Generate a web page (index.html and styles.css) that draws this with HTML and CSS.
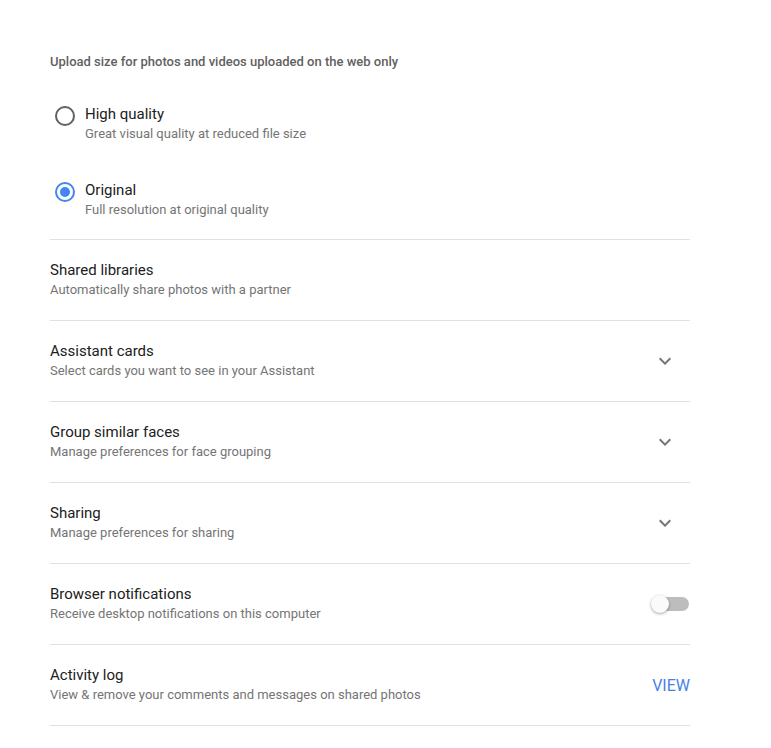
FILE: index.html
```html
<!DOCTYPE html>
<html lang="en">
<head>
<meta charset="utf-8">
<title>Settings</title>
<link rel="stylesheet" href="styles.css">
</head>
<body>
<main class="settings">
  <section class="upload">
    <div class="section-head">Upload size for photos and videos uploaded on the web only</div>
    <div class="radio-group">
      <div class="radio-option">
        <span class="radio"></span>
        <div class="text">
          <div class="title">High quality</div>
          <div class="sub">Great visual quality at reduced file size</div>
        </div>
      </div>
      <div class="radio-option">
        <span class="radio checked"></span>
        <div class="text">
          <div class="title">Original</div>
          <div class="sub">Full resolution at original quality</div>
        </div>
      </div>
    </div>
  </section>

  <div class="row">
    <div class="text">
      <div class="title">Shared libraries</div>
      <div class="sub">Automatically share photos with a partner</div>
    </div>
  </div>

  <div class="row">
    <div class="text">
      <div class="title">Assistant cards</div>
      <div class="sub">Select cards you want to see in your Assistant</div>
    </div>
    <svg class="chevron" viewBox="0 0 24 24" width="24" height="24"><path d="M16.59 8.59L12 13.17 7.41 8.59 6 10l6 6 6-6z"/></svg>
  </div>

  <div class="row">
    <div class="text">
      <div class="title">Group similar faces</div>
      <div class="sub">Manage preferences for face grouping</div>
    </div>
    <svg class="chevron" viewBox="0 0 24 24" width="24" height="24"><path d="M16.59 8.59L12 13.17 7.41 8.59 6 10l6 6 6-6z"/></svg>
  </div>

  <div class="row">
    <div class="text">
      <div class="title">Sharing</div>
      <div class="sub">Manage preferences for sharing</div>
    </div>
    <svg class="chevron" viewBox="0 0 24 24" width="24" height="24"><path d="M16.59 8.59L12 13.17 7.41 8.59 6 10l6 6 6-6z"/></svg>
  </div>

  <div class="row">
    <div class="text">
      <div class="title">Browser notifications</div>
      <div class="sub">Receive desktop notifications on this computer</div>
    </div>
    <div class="toggle"><span class="thumb"></span></div>
  </div>

  <div class="row">
    <div class="text">
      <div class="title">Activity log</div>
      <div class="sub">View &amp; remove your comments and messages on shared photos</div>
    </div>
    <span class="view">VIEW</span>
  </div>
</main>
</body>
</html>
```

FILE: styles.css
```css
html, body {
  margin: 0;
  padding: 0;
  background: #ffffff;
}

body {
  font-family: Roboto, "Noto Sans", Arial, sans-serif;
  color: #212121;
}

.settings {
  width: 640px;
  margin-left: 50px;
  padding-top: 52px;
}

.section-head {
  font-size: 13px;
  font-weight: 500;
  color: #616161;
  line-height: 20px;
}

.radio-group {
  display: flex;
  flex-direction: column;
  gap: 36px;
  padding: 32px 0 19px;
  border-bottom: 1px solid #e0e0e0;
}

.radio-option {
  display: flex;
  align-items: flex-start;
}

.radio {
  box-sizing: border-box;
  width: 20px;
  height: 20px;
  margin: 2px 10px 0 5px;
  border: 2px solid #616161;
  border-radius: 50%;
  position: relative;
  flex: none;
}

.radio.checked {
  border-color: #4285f4;
}

.radio.checked::after {
  content: "";
  position: absolute;
  left: 3px;
  top: 3px;
  width: 10px;
  height: 10px;
  border-radius: 50%;
  background: #4285f4;
}

.title {
  font-size: 15px;
  line-height: 20px;
  color: #212121;
}

.sub {
  font-size: 13px;
  line-height: 20px;
  color: #757575;
}

.row {
  display: flex;
  align-items: center;
  justify-content: space-between;
  padding: 20px 0;
  border-bottom: 1px solid #e0e0e0;
}

.chevron {
  fill: #757575;
  margin-right: 13px;
  flex: none;
}

.toggle {
  position: relative;
  width: 34px;
  height: 14px;
  border-radius: 7px;
  background: #bdbdbd;
  margin-right: 1px;
  flex: none;
}

.thumb {
  position: absolute;
  left: -4px;
  top: -2px;
  width: 18px;
  height: 18px;
  border-radius: 50%;
  background: #fafafa;
  box-shadow: 0 1px 3px rgba(0, 0, 0, 0.35);
}

.view {
  font-size: 16px;
  color: #4a7fe8;
}
```
